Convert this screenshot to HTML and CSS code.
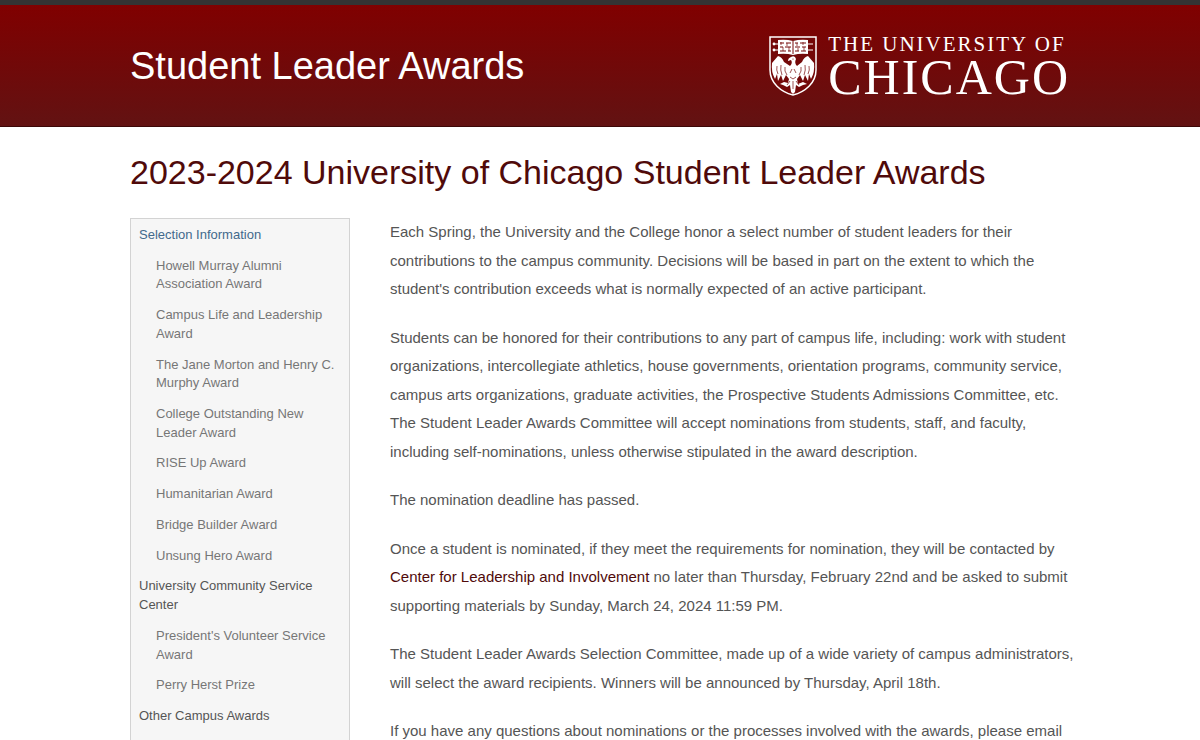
FILE: index.html
```
<!DOCTYPE html>
<html lang="en">
  <head>
    <meta charset="UTF-8" />
    <meta name="viewport" content="width=device-width, initial-scale=1.0" />
    <title>Student Leader Awards | The University of Chicago</title>
    <link rel="stylesheet" href="styles.css">
  </head>
  <body>
    <header class="site-header">
      <div class="container header-inner">
        <a class="site-title" href="#">Student Leader Awards</a>
        <a class="logo" href="#">
          <svg class="crest" viewBox="0 0 48 62" aria-hidden="true">
            <path d="M1 2H47V35C47 48 36 57 24 60C12 57 1 48 1 35Z" fill="#740909" stroke="#fff" stroke-width="1.5"/>
            <!-- book -->
            <path d="M9 5Q17 4 24 6Q31 4 39 5V19Q31 18 24 20Q17 18 9 19Z" fill="#fff"/>
            <path d="M24 6V19M11 8H15M17 8H22M11 12H14M16 12H22M11 16H17M19 16H22M26 8H29M31 8H37M26 12H31M33 12H37M26 16H30M32 16H37" stroke="#740909" stroke-width="1"/>
            <path d="M12 7V10M18 8V11M14 12V16M20 12V16M28 8V11M34 7V10M29 13V16M35 12V16" stroke="#740909" stroke-width=".7"/>
            <path d="M4 9H9M4 15H9M39 9H44M39 15H44" stroke="#fff" stroke-width="1.2"/>
            <circle cx="5" cy="9" r="1.4" fill="#fff"/>
            <circle cx="5" cy="15" r="1.4" fill="#fff"/>
            <!-- phoenix -->
            <path d="M22 22Q26 20 27 24Q25 28 28 31L33 27Q35 22 39 21L45 28Q46 37 42 44L40 39L39 46L36 40L34 46L31 40L28 44L29 49L34 47L38 49L34 50L30 52L27 50L26 57L24 59L22 57L21 50L18 52L14 50L11 49L15 47L19 48L20 44L17 40L14 46L12 40L9 46L8 39L6 44Q2 37 3 28L9 21Q13 22 15 27L21 31Q24 28 22 25L19 26Q19 23 22 22Z" fill="#fff"/>
            <path d="M8 31Q7 35 9 39M12 30Q11 35 13 40M16 32Q15 36 18 40M40 31Q41 35 39 39M36 30Q37 35 35 40M32 32Q33 36 30 40M23 34L21 38M25 34L27 38M21 42L24 44L27 42M24 46V54M21 46L18 50M27 46L30 50" fill="none" stroke="#740909" stroke-width=".7"/>
            <circle cx="24" cy="24" r=".6" fill="#740909"/>
          </svg>
          <span class="wordmark">
            <span class="wordmark-top">THE UNIVERSITY OF</span>
            <span class="wordmark-main">CHICAGO</span>
          </span>
        </a>
      </div>
    </header>

    <main class="container">
      <h1>2023-2024 University of Chicago Student Leader Awards</h1>
      <div class="columns">
        <nav class="sidebar" aria-label="Awards">
          <ul>
            <li>
              <a class="active" href="#">Selection Information</a>
              <ul>
                <li><a href="#">Howell Murray Alumni Association Award</a></li>
                <li><a href="#">Campus Life and Leadership Award</a></li>
                <li><a href="#">The Jane Morton and Henry C. Murphy Award</a></li>
                <li><a href="#">College Outstanding New Leader Award</a></li>
                <li><a href="#">RISE Up Award</a></li>
                <li><a href="#">Humanitarian Award</a></li>
                <li><a href="#">Bridge Builder Award</a></li>
                <li><a href="#">Unsung Hero Award</a></li>
              </ul>
            </li>
            <li>
              <a href="#">University Community Service Center</a>
              <ul>
                <li><a href="#">President's Volunteer Service Award</a></li>
                <li><a href="#">Perry Herst Prize</a></li>
              </ul>
            </li>
            <li><a href="#">Other Campus Awards</a></li>
          </ul>
        </nav>
        <div class="content">
          <p>Each Spring, the University and the College honor a select number of student leaders for their contributions to the campus community. Decisions will be based in part on the extent to which the student's contribution exceeds what is normally expected of an active participant.</p>
          <p>Students can be honored for their contributions to any part of campus life, including: work with student organizations, intercollegiate athletics, house governments, orientation programs, community service, campus arts organizations, graduate activities, the Prospective Students Admissions Committee, etc. The Student Leader Awards Committee will accept nominations from students, staff, and faculty, including self-nominations, unless otherwise stipulated in the award description.</p>
          <p>The nomination deadline has passed.</p>
          <p>Once a student is nominated, if they meet the requirements for nomination, they will be contacted by <a href="#">Center for Leadership and Involvement</a> no later than Thursday, February 22nd and be asked to submit supporting materials by Sunday, March 24, 2024 11:59 PM.</p>
          <p>The Student Leader Awards Selection Committee, made up of a wide variety of campus administrators, will select the award recipients. Winners will be announced by Thursday, April 18th.</p>
          <p>If you have any questions about nominations or the processes involved with the awards, please email</p>
        </div>
      </div>
    </main>
  </body>
</html>
```
FILE: styles.css
```
* {
  box-sizing: border-box;
}
body {
  margin: 0;
  font-family: "Liberation Sans", Arial, Helvetica, sans-serif;
  font-size: 15px;
  line-height: 1.9;
  color: #555;
  background: #fff;
}
a {
  color: #500a0a;
  text-decoration: none;
}
.container {
  max-width: 980px;
  margin: 0 auto;
  padding: 0 20px;
}
.site-header {
  border-top: 5px solid #333;
  border-bottom: 1px solid #3d0808;
  background: linear-gradient(#800000, #621212);
}
.header-inner {
  display: flex;
  align-items: flex-start;
  justify-content: space-between;
  padding-top: 30px;
  padding-bottom: 26px;
}
.site-title {
  color: #fff;
  font-size: 38px;
  line-height: 62px;
}
.logo {
  display: flex;
  align-items: flex-start;
  gap: 11px;
  color: #fff;
  font-family: "Liberation Serif", "Times New Roman", serif;
}
.crest {
  width: 48px;
  height: 62px;
}
.wordmark {
  display: flex;
  flex-direction: column;
}
.wordmark-top {
  font-size: 21px;
  line-height: 19px;
  letter-spacing: 2px;
}
.wordmark-main {
  font-size: 50px;
  line-height: 46px;
  letter-spacing: 2px;
}
h1 {
  margin: 25px 0 26px;
  color: #500a0a;
  font-size: 34px;
  font-weight: normal;
  line-height: 40px;
}
.columns {
  display: flex;
  gap: 40px;
}
.sidebar {
  flex: 0 0 220px;
  padding: 1px 0;
  border: 1px solid #d3d3d3;
  background: #f6f6f6;
  font-size: 13px;
  line-height: 1.44;
}
.sidebar ul {
  margin: 0;
  padding: 0;
  list-style: none;
}
.sidebar a {
  display: block;
  padding: 6px 8px;
  color: #555;
}
.sidebar ul ul a {
  padding-left: 25px;
  color: #767676;
}
.sidebar .active {
  color: #42698c;
}
.content {
  flex: 1;
  margin-right: -16px;
}
.content p {
  margin: 0 0 20px;
}
```
